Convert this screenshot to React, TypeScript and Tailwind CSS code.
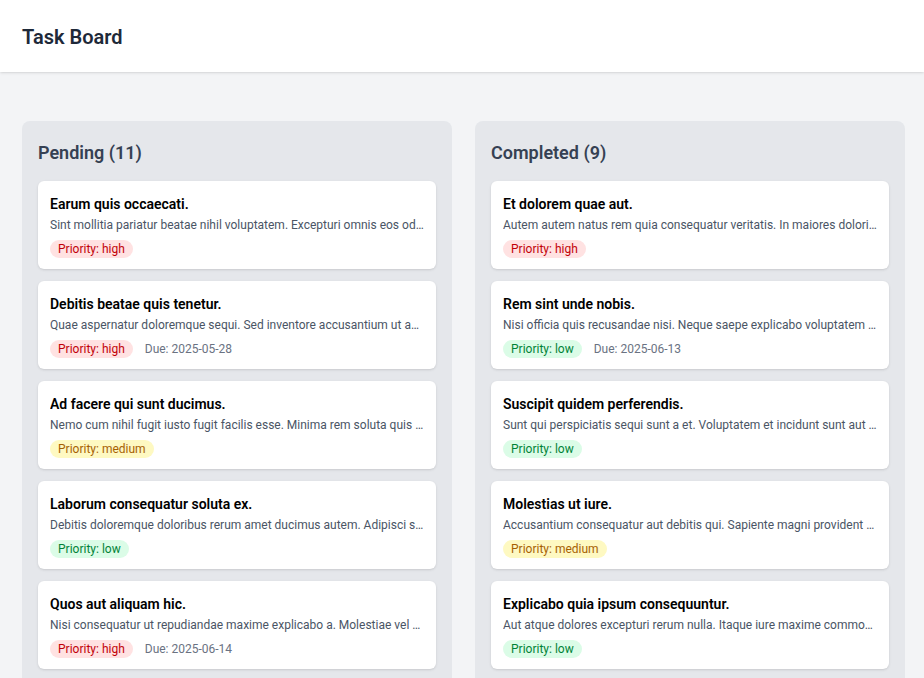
import React from "react";

type Priority = "high" | "medium" | "low";
type Task = { title: string; desc: string; priority: Priority; due?: string };

const pending: Task[] = [
  { title: "Earum quis occaecati.", desc: "Sint mollitia pariatur beatae nihil voluptatem. Excepturi omnis eos odio quia et sequi.", priority: "high" },
  { title: "Debitis beatae quis tenetur.", desc: "Quae aspernatur doloremque sequi. Sed inventore accusantium ut aut dolorem.", priority: "high", due: "2025-05-28" },
  { title: "Ad facere qui sunt ducimus.", desc: "Nemo cum nihil fugit iusto fugit facilis esse. Minima rem soluta quis laboriosam.", priority: "medium" },
  { title: "Laborum consequatur soluta ex.", desc: "Debitis doloremque doloribus rerum amet ducimus autem. Adipisci sit voluptas.", priority: "low" },
  { title: "Quos aut aliquam hic.", desc: "Nisi consequatur ut repudiandae maxime explicabo a. Molestiae vel eum quia.", priority: "high", due: "2025-06-14" },
  { title: "Voluptas et numquam.", desc: "Omnis voluptatem quia et magnam. Qui laborum sint aut nihil.", priority: "low" },
];

const completed: Task[] = [
  { title: "Et dolorem quae aut.", desc: "Autem autem natus rem quia consequatur veritatis. In maiores doloribus quia.", priority: "high" },
  { title: "Rem sint unde nobis.", desc: "Nisi officia quis recusandae nisi. Neque saepe explicabo voluptatem ut.", priority: "low", due: "2025-06-13" },
  { title: "Suscipit quidem perferendis.", desc: "Sunt qui perspiciatis sequi sunt a et. Voluptatem et incidunt sunt aut quia.", priority: "low" },
  { title: "Molestias ut iure.", desc: "Accusantium consequatur aut debitis qui. Sapiente magni provident est.", priority: "medium" },
  { title: "Explicabo quia ipsum consequuntur.", desc: "Aut atque dolores excepturi rerum nulla. Itaque iure maxime commodi.", priority: "low" },
  { title: "Quia eos dolorum.", desc: "Ut quis sed et voluptas. Nemo aut fugiat est.", priority: "medium" },
];

const badgeClass: Record<Priority, string> = {
  high: "bg-red-100 text-red-700",
  medium: "bg-yellow-100 text-yellow-700",
  low: "bg-green-100 text-green-700",
};

function Card({ t }: { t: Task }) {
  return (
    <div className="rounded-md bg-white px-3 pt-[13px] pb-[11px] shadow-sm">
      <div className="truncate text-sm leading-5 font-semibold text-black">{t.title}</div>
      <div className="mt-[3px] truncate text-xs leading-4 text-gray-600">{t.desc}</div>
      <div className="mt-[7px] flex items-center gap-3">
        <span className={`inline-flex h-[18px] items-center rounded-full px-2 text-xs ${badgeClass[t.priority]}`}>
          Priority: {t.priority}
        </span>
        {t.due && <span className="text-xs text-gray-500">Due: {t.due}</span>}
      </div>
    </div>
  );
}

function Column({ title, tasks }: { title: string; tasks: Task[] }) {
  return (
    <div className="w-[430px] shrink-0 rounded-lg bg-gray-200 px-4 pt-[18px]">
      <h2 className="mb-[14px] text-lg leading-7 font-semibold text-gray-700">{title}</h2>
      <div className="flex flex-col gap-3">
        {tasks.map((t, i) => (
          <Card key={i} t={t} />
        ))}
      </div>
    </div>
  );
}

export default function App() {
  return (
    <div className="h-screen overflow-hidden bg-gray-100" style={{ fontFamily: "Roboto, sans-serif" }}>
      <header className="flex h-[72px] items-center bg-white px-[22px] pt-0.5 shadow-sm">
        <h1 className="text-xl font-semibold text-gray-800">Task Board</h1>
      </header>
      <main className="flex items-start gap-[23px] px-[22px] pt-[49px]">
        <Column title="Pending (11)" tasks={pending} />
        <Column title="Completed (9)" tasks={completed} />
      </main>
    </div>
  );
}
